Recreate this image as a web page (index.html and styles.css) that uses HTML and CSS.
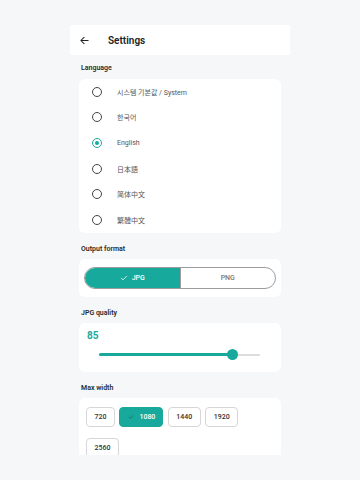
FILE: index.html
```html
<!DOCTYPE html>
<html lang="ko">
<head>
<meta charset="utf-8">
<title>Settings</title>
<link rel="stylesheet" href="styles.css">
</head>
<body>
<div class="screen">
  <header class="topbar">
    <svg class="back" viewBox="0 0 24 24" width="11" height="11" aria-hidden="true">
      <path d="M20 12H5M11 5l-7 7 7 7" fill="none" stroke="#222" stroke-width="2.2" stroke-linecap="round" stroke-linejoin="round"/>
    </svg>
    <h1 class="title">Settings</h1>
  </header>
  <main class="content">
    <div class="label first">Language</div>
    <div class="card lang">
      <div class="row"><span class="radio"></span><span class="opt">시스템 기본값 / System</span></div>
      <div class="row"><span class="radio"></span><span class="opt">한국어</span></div>
      <div class="row"><span class="radio on"></span><span class="opt">English</span></div>
      <div class="row"><span class="radio"></span><span class="opt">日本語</span></div>
      <div class="row"><span class="radio"></span><span class="opt">简体中文</span></div>
      <div class="row"><span class="radio"></span><span class="opt">繁體中文</span></div>
    </div>

    <div class="label">Output format</div>
    <div class="card fmt">
      <div class="seg">
        <div class="seg-btn sel">
          <svg viewBox="0 0 24 24" width="8" height="8" aria-hidden="true"><path d="M4 12.5l5 5L20 6.5" fill="none" stroke="#fff" stroke-width="2.4" stroke-linecap="round" stroke-linejoin="round"/></svg>
          <span>JPG</span>
        </div>
        <div class="seg-btn"><span>PNG</span></div>
      </div>
    </div>

    <div class="label">JPG quality</div>
    <div class="card quality">
      <div class="qval">85</div>
      <div class="slider">
        <div class="track"></div>
        <div class="active" style="width:83%"></div>
        <div class="thumb" style="left:83%"></div>
      </div>
    </div>

    <div class="label">Max width</div>
    <div class="card widths">
      <span class="chip">720</span>
      <span class="chip sel"><svg viewBox="0 0 24 24" width="6" height="6" aria-hidden="true"><path d="M4 12.5l5 5L20 6.5" fill="none" stroke="#2f5f5a" stroke-width="2.6" stroke-linecap="round" stroke-linejoin="round"/></svg>1080</span>
      <span class="chip">1440</span>
      <span class="chip">1920</span>
      <span class="chip">2560</span>
    </div>
  </main>
</div>
</body>
</html>
```

FILE: styles.css
```css
* { box-sizing: border-box; }
html, body { margin: 0; padding: 0; }
body {
  background: #f6f7f9;
  font-family: Roboto, "Noto Sans CJK KR", "Noto Sans CJK JP", sans-serif;
  color: #222;
  width: 360px;
  height: 480px;
  overflow: hidden;
}
.screen {
  width: 220px;
  margin: 25px 0 0 70px;
  height: 430px;
  overflow: hidden;
}
.topbar {
  height: 30px;
  background: #fff;
  display: flex;
  align-items: center;
  padding-left: 9px;
}
.back { display: block; }
.title {
  margin: 0 0 0 18px;
  font-size: 10px;
  font-weight: 600;
  color: #222;
}
.content {
  padding: 0 9px;
}
.label {
  font-size: 7px;
  font-weight: 600;
  color: #2a2a2a;
  line-height: 10px;
  margin: 11px 0 5px 2px;
}
.label.first { margin-top: 8px; margin-bottom: 6px; }
.card {
  background: #fff;
  border-radius: 6px;
}
.lang { padding: 0; }
.row {
  height: 25.6px;
  display: flex;
  align-items: center;
  padding-left: 13px;
}
.radio {
  width: 10px;
  height: 10px;
  border: 1.4px solid #444;
  border-radius: 50%;
  position: relative;
  flex: none;
}
.radio.on { border-color: #17a99b; }
.radio.on::after {
  content: "";
  position: absolute;
  left: 50%; top: 50%;
  width: 4.6px; height: 4.6px;
  margin: -2.3px 0 0 -2.3px;
  border-radius: 50%;
  background: #17a99b;
}
.opt {
  margin-left: 15px;
  font-size: 7px;
  color: #555;
}
.fmt { padding: 8px 5px; }
.seg {
  display: flex;
  height: 22px;
  border: 1px solid #9c9c9c;
  border-radius: 11px;
  overflow: hidden;
}
.seg-btn {
  flex: 1;
  display: flex;
  align-items: center;
  justify-content: center;
  gap: 4px;
  font-size: 7px;
  font-weight: 500;
  color: #777;
}
.seg-btn.sel {
  background: #17a99b;
  color: #fff;
  border-right: 1px solid #9c9c9c;
}
.quality { padding: 7px 8px 11px; height: 49px; }
.qval {
  font-size: 10px;
  font-weight: 700;
  color: #17a99b;
  line-height: 12px;
}
.slider {
  position: relative;
  height: 12px;
  margin: 7px 13px 0 12px;
}
.track {
  position: absolute;
  left: 0; right: 0; top: 5px;
  height: 2px;
  background: #dcdcdc;
  border-radius: 1px;
}
.active {
  position: absolute;
  left: 0; top: 4.5px;
  height: 3px;
  background: #17a99b;
  border-radius: 2px;
}
.thumb {
  position: absolute;
  top: 0.5px;
  width: 11px; height: 11px;
  margin-left: -5.5px;
  border-radius: 50%;
  background: #17a99b;
}
.widths {
  display: flex;
  flex-wrap: wrap;
  gap: 11px 4.5px;
  padding: 9px 6px 10px 7px;
}
.chip {
  height: 20px;
  display: inline-flex;
  align-items: center;
  gap: 4px;
  padding: 0 7.5px;
  border: 1px solid #d6d6d6;
  border-radius: 4px;
  font-size: 7px;
  font-weight: 500;
  color: #333;
}
.chip.sel {
  background: #17a99b;
  border-color: #17a99b;
  color: #fff;
  padding: 0 7px 0 8px;
  gap: 5px;
}
```
